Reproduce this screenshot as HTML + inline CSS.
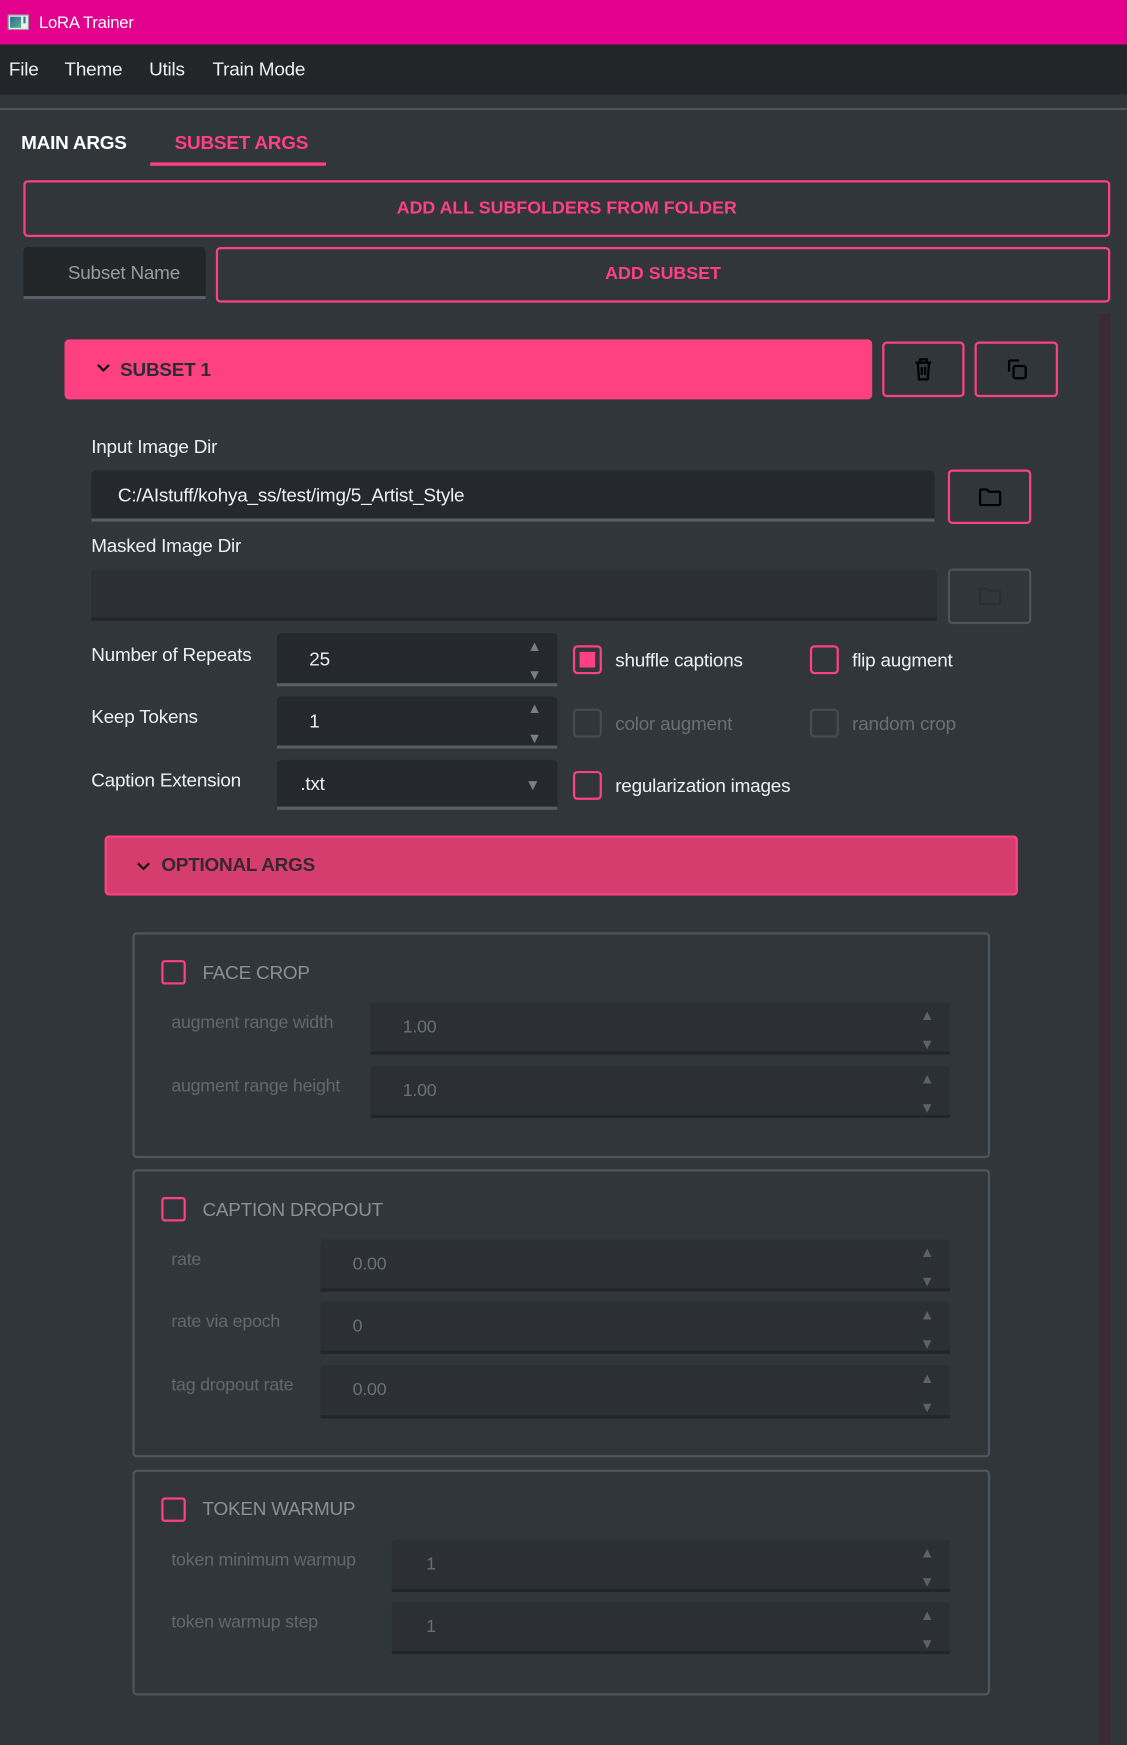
<!DOCTYPE html>
<html><head><meta charset="utf-8">
<style>
html,body{margin:0;padding:0;background:#31363b;width:1127px;height:1745px;overflow:hidden}
#w{position:absolute;left:0;top:0;width:1013px;height:1568px;transform:scale(1.1125);transform-origin:0 0;background:#31363b;font-family:"Liberation Sans",sans-serif;color:#eff0f1;font-size:16px}
#w div{position:absolute;box-sizing:border-box}
.t{white-space:nowrap;line-height:20px;margin-top:1px;letter-spacing:-0.2px}
.btn{border:2px solid #ff4081;border-radius:4px;color:#ff4081;font-weight:bold;display:flex;align-items:center;justify-content:center;font-size:16px}
.inp{background:#25282c;border-bottom:3px solid #5a5e63;border-radius:4px 4px 0 0}
.dis{background:#2c2f33;border-bottom:3px solid #232629;border-radius:4px 4px 0 0}
.cb{width:26px;height:26px;border:2px solid #ff4081;border-radius:4px}
.cbd{width:26px;height:26px;border:2px solid #454c53;border-radius:4px}
.cbs{width:22px;height:22px;border:2px solid #ff4081;border-radius:3px}
.grp{border:2px solid #4b5660;border-radius:4px}
.lab{color:#62686e;font-size:16px}
.ar{color:#7c7f82;font-size:13px}
.ard{color:#5a626a;font-size:13px}
.dv{color:#6b7075;font-size:16px}
</style></head><body>
<div id="w">
<div style="left:0;top:0;width:1013px;height:40px;background:#e3008c"></div>
<div style="left:7px;top:13px;width:19px;height:14px;background:#eee;border:1px solid #999"></div>
<div style="left:9px;top:15px;width:10px;height:10px;background:linear-gradient(135deg,#2a6a9a,#5bb08a)"></div>
<div style="left:21px;top:15px;width:2px;height:6px;background:#2a7a90"></div>
<div class="t" style="left:35px;top:10px;font-size:15px;color:#fff">LoRA Trainer</div>
<div style="left:0;top:40px;width:1013px;height:45px;background:#232629"></div>
<div class="t" style="left:8px;top:52px;font-size:17px">File</div>
<div class="t" style="left:58px;top:52px;font-size:17px">Theme</div>
<div class="t" style="left:134px;top:52px;font-size:17px">Utils</div>
<div class="t" style="left:191px;top:52px;font-size:17px">Train Mode</div>
<div style="left:0;top:97px;width:1013px;height:2px;background:#4d555d"></div>
<div class="t" style="left:19px;top:118px;font-size:17px;font-weight:bold;color:#fff">MAIN ARGS</div>
<div class="t" style="left:157px;top:118px;font-size:17px;font-weight:bold;color:#ff4081">SUBSET ARGS</div>
<div style="left:135px;top:146px;width:158px;height:3px;background:#ff4081"></div>
<div class="btn" style="left:21px;top:162px;width:977px;height:51px">ADD ALL SUBFOLDERS FROM FOLDER</div>
<div class="inp" style="left:21px;top:222px;width:164px;height:47px;background:#232629"></div>
<div class="t" style="left:61px;top:235px;color:#9a9b9c;font-size:17px">Subset Name</div>
<div class="btn" style="left:194px;top:222px;width:804px;height:50px">ADD SUBSET</div>
<div style="left:988px;top:282px;width:10px;height:1286px;background:#3b2a33"></div>
<div style="left:58px;top:305px;width:726px;height:54px;background:#ff4081;border-radius:4px"></div>
<svg style="position:absolute;left:86px;top:326px" width="14" height="10" viewBox="0 0 14 10"><path d="M2 2l5 5 5-5" fill="none" stroke="#111" stroke-width="2"/></svg>
<div class="t" style="left:108px;top:322px;font-weight:bold;color:#2a2d31;font-size:17px">SUBSET 1</div>
<div class="btn" style="left:793px;top:307px;width:74px;height:50px"><svg width="20" height="22" viewBox="0 0 20 22"><path d="M3 5h14M7 5V2h6v3M5 5l1 15h8l1-15M8.5 9v7M11.5 9v7" fill="none" stroke="#000" stroke-width="2" stroke-linejoin="round"/></svg></div>
<div class="btn" style="left:876px;top:307px;width:75px;height:50px"><svg width="22" height="22" viewBox="0 0 22 22"><path d="M4 13V4a1 1 0 011-1h8" fill="none" stroke="#000" stroke-width="2"/><rect x="8" y="8" width="11" height="11" rx="2" fill="none" stroke="#000" stroke-width="2"/></svg></div>
<div class="t" style="left:82px;top:391px;font-size:17px">Input Image Dir</div>
<div class="inp" style="left:82px;top:423px;width:758px;height:46px"></div>
<div class="t" style="left:106px;top:435px;font-size:17px">C:/AIstuff/kohya_ss/test/img/5_Artist_Style</div>
<div class="btn" style="left:852px;top:422px;width:75px;height:49px"><svg width="22" height="20" viewBox="0 0 22 20"><path d="M2 4a1 1 0 011-1h5l2 2h9a1 1 0 011 1v10a1 1 0 01-1 1H3a1 1 0 01-1-1z" fill="none" stroke="#000" stroke-width="2" stroke-linejoin="round"/></svg></div>
<div class="t" style="left:82px;top:480px;font-size:17px">Masked Image Dir</div>
<div class="dis" style="left:82px;top:512px;width:760px;height:46px"></div>
<div class="btn" style="left:852px;top:511px;width:75px;height:50px;border-color:#4b545c"><svg width="22" height="20" viewBox="0 0 22 20"><path d="M2 4a1 1 0 011-1h5l2 2h9a1 1 0 011 1v10a1 1 0 01-1 1H3a1 1 0 01-1-1z" fill="none" stroke="#2c2f32" stroke-width="2" stroke-linejoin="round"/></svg></div>
<div class="t" style="left:82px;top:578px;font-size:17px">Number of Repeats</div>
<div class="inp" style="left:249px;top:569px;width:252px;height:48px"></div>
<div class="t" style="left:278px;top:582px;font-size:17px">25</div>
<div class="t ar" style="left:474px;top:570px">▲</div><div class="t ar" style="left:474px;top:596px">▼</div>
<div class="t" style="left:82px;top:634px;font-size:17px">Keep Tokens</div>
<div class="inp" style="left:249px;top:626px;width:252px;height:47px"></div>
<div class="t" style="left:278px;top:638px;font-size:17px">1</div>
<div class="t ar" style="left:474px;top:626px">▲</div><div class="t ar" style="left:474px;top:653px">▼</div>
<div class="t" style="left:82px;top:691px;font-size:17px">Caption Extension</div>
<div class="inp" style="left:249px;top:683px;width:252px;height:45px"></div>
<div class="t" style="left:270px;top:694px;font-size:17px">.txt</div>
<div class="t ar" style="left:472px;top:694px;font-size:14px">▼</div>
<div class="cb" style="left:515px;top:580px"></div>
<div style="left:521px;top:586px;width:14px;height:14px;background:#ff4081"></div>
<div class="t" style="left:553px;top:583px;font-size:17px">shuffle captions</div>
<div class="cb" style="left:728px;top:580px"></div>
<div class="t" style="left:766px;top:583px;font-size:17px">flip augment</div>
<div class="cbd" style="left:515px;top:637px"></div>
<div class="t" style="left:553px;top:640px;font-size:17px;color:#6a6f74">color augment</div>
<div class="cbd" style="left:728px;top:637px"></div>
<div class="t" style="left:766px;top:640px;font-size:17px;color:#6a6f74">random crop</div>
<div class="cb" style="left:515px;top:693px"></div>
<div class="t" style="left:553px;top:696px;font-size:17px">regularization images</div>
<div style="left:94px;top:751px;width:821px;height:54px;background:#d53d6f;border:2px solid #ff4081;border-radius:4px"></div>
<svg style="position:absolute;left:122px;top:774px" width="14" height="10" viewBox="0 0 14 10"><path d="M2 2l5 5 5-5" fill="none" stroke="#111" stroke-width="2"/></svg>
<div class="t" style="left:145px;top:767px;font-weight:bold;color:#33282e;font-size:17px">OPTIONAL ARGS</div>
<div class="grp" style="left:119px;top:838px;width:771px;height:203px"></div>
<div class="cbs" style="left:145px;top:863px"></div>
<div class="t" style="left:182px;top:864px;font-size:17px;color:#8b9095">FACE CROP</div>
<div class="t lab" style="left:154px;top:909px">augment range width</div>
<div class="dis" style="left:333px;top:901px;width:521px;height:47px"></div>
<div class="t dv" style="left:362px;top:913px">1.00</div>
<div class="t ard" style="left:827px;top:902px">▲</div><div class="t ard" style="left:827px;top:928px">▼</div>
<div class="t lab" style="left:154px;top:966px">augment range height</div>
<div class="dis" style="left:333px;top:958px;width:521px;height:47px"></div>
<div class="t dv" style="left:362px;top:970px">1.00</div>
<div class="t ard" style="left:827px;top:959px">▲</div><div class="t ard" style="left:827px;top:985px">▼</div>
<div class="grp" style="left:119px;top:1051px;width:771px;height:259px"></div>
<div class="cbs" style="left:145px;top:1076px"></div>
<div class="t" style="left:182px;top:1077px;font-size:17px;color:#8b9095">CAPTION DROPOUT</div>
<div class="t lab" style="left:154px;top:1122px">rate</div>
<div class="dis" style="left:288px;top:1114px;width:566px;height:47px"></div>
<div class="t dv" style="left:317px;top:1126px">0.00</div>
<div class="t ard" style="left:827px;top:1115px">▲</div><div class="t ard" style="left:827px;top:1141px">▼</div>
<div class="t lab" style="left:154px;top:1178px">rate via epoch</div>
<div class="dis" style="left:288px;top:1170px;width:566px;height:47px"></div>
<div class="t dv" style="left:317px;top:1182px">0</div>
<div class="t ard" style="left:827px;top:1171px">▲</div><div class="t ard" style="left:827px;top:1197px">▼</div>
<div class="t lab" style="left:154px;top:1235px">tag dropout rate</div>
<div class="dis" style="left:288px;top:1227px;width:566px;height:48px"></div>
<div class="t dv" style="left:317px;top:1239px">0.00</div>
<div class="t ard" style="left:827px;top:1228px">▲</div><div class="t ard" style="left:827px;top:1254px">▼</div>
<div class="grp" style="left:119px;top:1321px;width:771px;height:203px"></div>
<div class="cbs" style="left:145px;top:1346px"></div>
<div class="t" style="left:182px;top:1346px;font-size:17px;color:#8b9095">TOKEN WARMUP</div>
<div class="t lab" style="left:154px;top:1392px">token minimum warmup</div>
<div class="dis" style="left:352px;top:1384px;width:502px;height:47px"></div>
<div class="t dv" style="left:383px;top:1396px">1</div>
<div class="t ard" style="left:827px;top:1385px">▲</div><div class="t ard" style="left:827px;top:1411px">▼</div>
<div class="t lab" style="left:154px;top:1448px">token warmup step</div>
<div class="dis" style="left:352px;top:1440px;width:502px;height:47px"></div>
<div class="t dv" style="left:383px;top:1452px">1</div>
<div class="t ard" style="left:827px;top:1441px">▲</div><div class="t ard" style="left:827px;top:1467px">▼</div>
</div>
</body></html>
